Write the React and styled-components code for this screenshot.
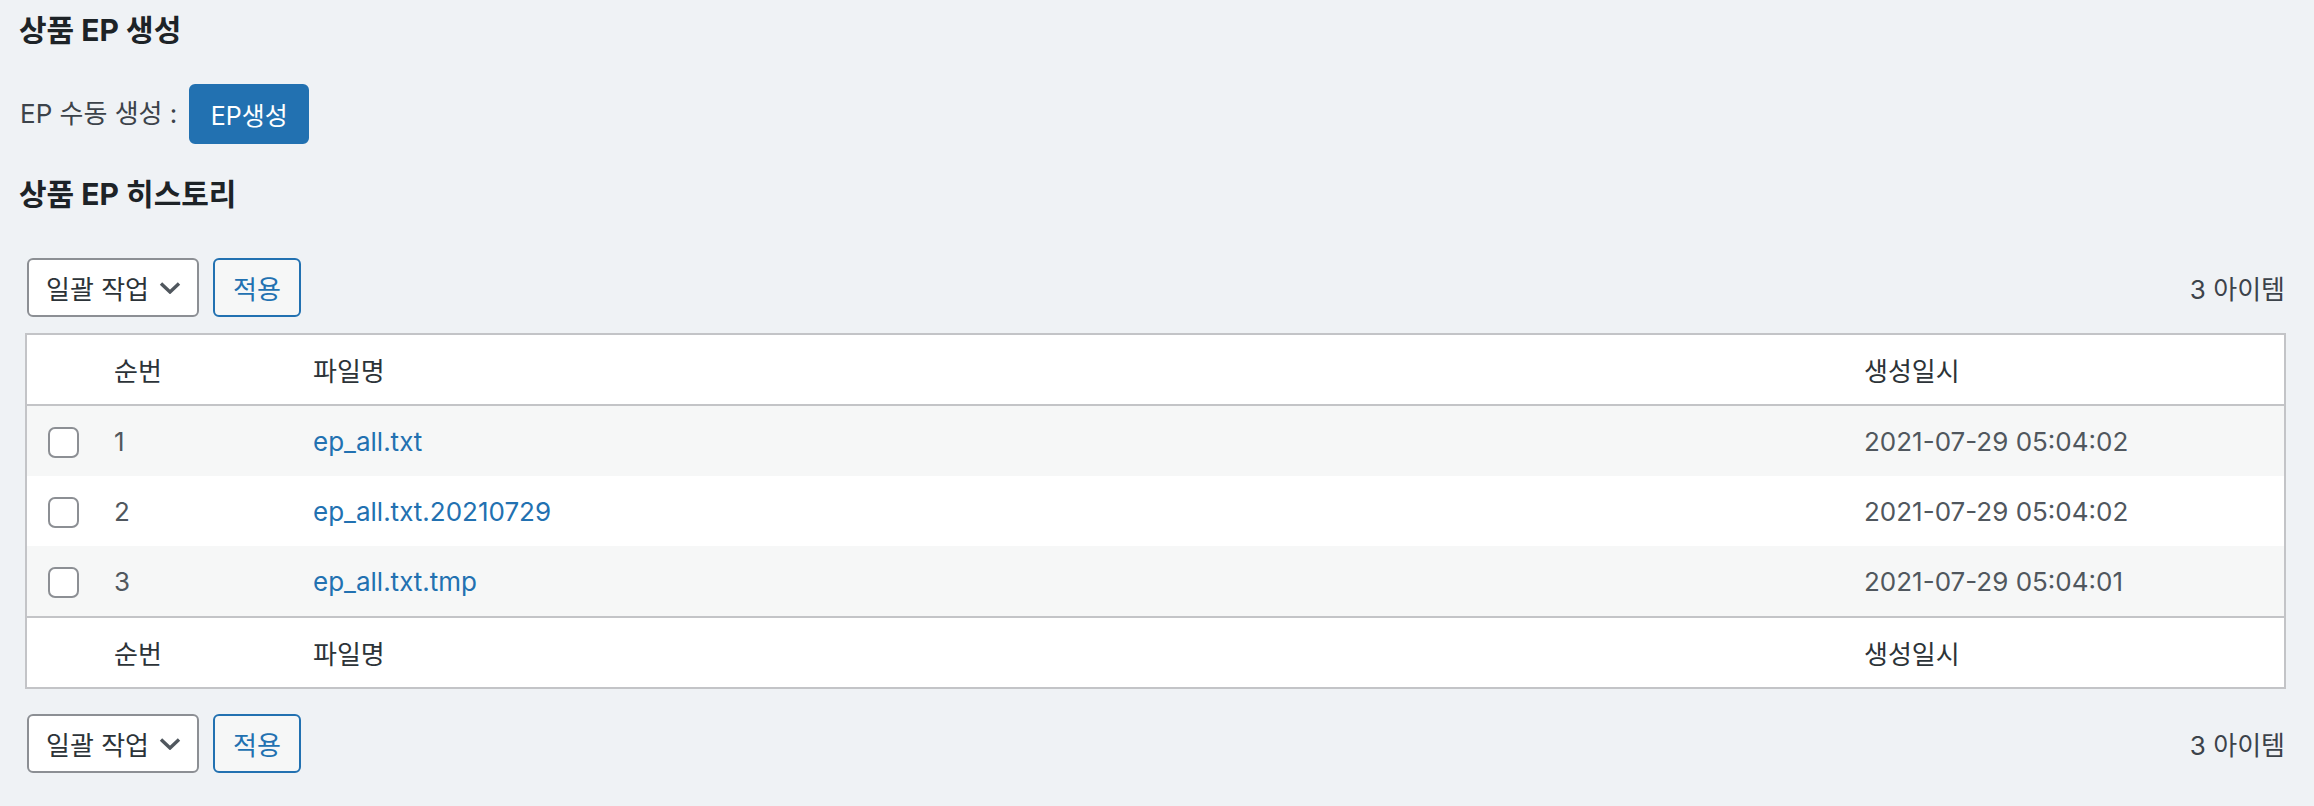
import styled, { createGlobalStyle } from 'styled-components'

const GlobalStyle = createGlobalStyle`
  html, body {
    margin: 0;
    padding: 0;
    background: #eff2f5;
  }
  body {
    font-family: Inter, "Noto Sans CJK KR", sans-serif;
    font-size: 26px;
    color: #3c434a;
  }
`

const files = [
  { no: 1, name: 'ep_all.txt', date: '2021-07-29 05:04:02' },
  { no: 2, name: 'ep_all.txt.20210729', date: '2021-07-29 05:04:02' },
  { no: 3, name: 'ep_all.txt.tmp', date: '2021-07-29 05:04:01' }
]

function Chevron() {
  return (
    <svg width="22" height="12" viewBox="0 0 22 12">
      <polyline points="2,1.5 11,10 20,1.5" fill="none" stroke="#50575e" strokeWidth="3.4" />
    </svg>
  )
}

function TableNav() {
  return (
    <Nav>
      <Actions>
        <BulkSelect>
          <span>일괄 작업</span>
          <Chevron />
        </BulkSelect>
        <ApplyButton>적용</ApplyButton>
      </Actions>
      <Count>3 아이템</Count>
    </Nav>
  )
}

function HeaderRow() {
  return (
    <tr>
      <HeadCell />
      <HeadCell>순번</HeadCell>
      <HeadCell>파일명</HeadCell>
      <HeadCell>생성일시</HeadCell>
    </tr>
  )
}

function App() {
  return (
    <>
      <GlobalStyle />
      <Wrap>
        <Title>상품 EP 생성</Title>
        <ManualRow>
          <span>EP 수동 생성 :</span>
          <PrimaryButton>EP생성</PrimaryButton>
        </ManualRow>
        <Title $second>상품 EP 히스토리</Title>
        <ListArea>
          <TableNav />
          <Table>
            <colgroup>
              <col style={{ width: 68 }} />
              <col style={{ width: 199 }} />
              <col style={{ width: 1551 }} />
              <col />
            </colgroup>
            <thead>
              <HeaderRow />
            </thead>
            <tbody>
              {files.map((f, i) => (
                <BodyRow key={f.no} $striped={i % 2 === 0}>
                  <CheckCell>
                    <Check />
                  </CheckCell>
                  <Cell>{f.no}</Cell>
                  <Cell>
                    <FileLink>{f.name}</FileLink>
                  </Cell>
                  <Cell>{f.date}</Cell>
                </BodyRow>
              ))}
            </tbody>
            <tfoot>
              <HeaderRow />
            </tfoot>
          </Table>
          <TableNav />
        </ListArea>
      </Wrap>
    </>
  )
}

const Wrap = styled.div`
  padding: 11px 28px 40px 19px;
`

const Title = styled.h2`
  margin: ${(p) => (p.$second ? '31px 0 0' : '0')};
  font-size: 30px;
  line-height: 38px;
  font-weight: 700;
  color: #1d2327;
`

const ManualRow = styled.div`
  display: flex;
  align-items: center;
  gap: 12px;
  margin-top: 35px;
  height: 60px;
  padding-left: 1px;
  line-height: 1;
`

const PrimaryButton = styled.button`
  height: 60px;
  width: 120px;
  border: 2px solid #2271b1;
  border-radius: 6px;
  background: #2271b1;
  color: #fff;
  font-family: inherit;
  font-size: 25px;
  padding: 0;
`

const ListArea = styled.div`
  margin: 45px 0 0 6px;
`

const Nav = styled.div`
  display: flex;
  align-items: center;
  justify-content: space-between;
  height: 59px;
  padding-left: 2px;
  & + table {
    margin-top: 16px;
  }
  table + & {
    margin-top: 25px;
  }
`

const Actions = styled.div`
  display: flex;
  gap: 14px;
`

const BulkSelect = styled.div`
  box-sizing: border-box;
  display: flex;
  align-items: center;
  justify-content: space-between;
  width: 172px;
  height: 59px;
  padding: 0 16px 0 17px;
  border: 2px solid #8c8f94;
  border-radius: 6px;
  background: #fff;
  color: #2c3338;
`

const ApplyButton = styled.button`
  box-sizing: border-box;
  width: 88px;
  height: 59px;
  border: 2px solid #2271b1;
  border-radius: 6px;
  background: #f6f7f7;
  color: #2271b1;
  font-family: inherit;
  font-size: 26px;
  padding: 0;
`

const Count = styled.span`
  color: #3c434a;
  margin-right: 1px;
`

const Table = styled.table`
  width: 100%;
  table-layout: fixed;
  border-collapse: collapse;
  border: 2px solid #c3c4c7;
  background: #fff;
`

const HeadCell = styled.th`
  height: 69px;
  padding: 0 20px;
  text-align: left;
  font-weight: 400;
  color: #2c3338;
  border-bottom: 2px solid #c3c4c7;
  tfoot & {
    border-bottom: none;
    border-top: 2px solid #c3c4c7;
  }
`

const BodyRow = styled.tr`
  background: ${(p) => (p.$striped ? '#f6f7f7' : '#fff')};
`

const Cell = styled.td`
  height: 70px;
  padding: 0 20px;
  color: #50575e;
`

const CheckCell = styled.td`
  padding: 0 0 0 21px;
  vertical-align: middle;
`

const Check = styled.span`
  box-sizing: border-box;
  display: block;
  width: 31px;
  height: 31px;
  margin-top: 3px;
  border: 2px solid #8c8f94;
  border-radius: 7px;
  background: #fff;
`

const FileLink = styled.a`
  color: #2271b1;
  text-decoration: none;
`

export default App
